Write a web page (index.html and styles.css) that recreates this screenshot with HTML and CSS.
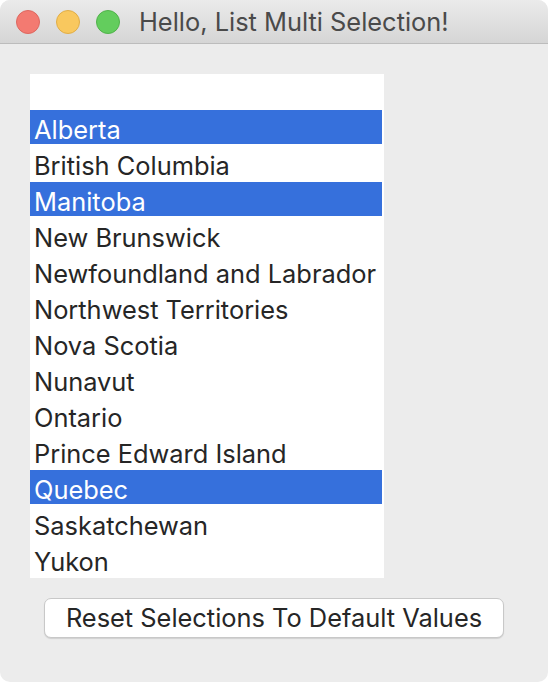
FILE: index.html
```html
<!DOCTYPE html>
<html>
<head>
<meta charset="utf-8">
<link rel="stylesheet" href="styles.css">
</head>
<body>
<div class="window">
  <div class="titlebar">
    <span class="light red"></span>
    <span class="light yellow"></span>
    <span class="light green"></span>
    <span class="title">Hello, List Multi Selection!</span>
  </div>
  <div class="content">
    <div class="list">
      <div class="row blank"></div>
      <div class="row selected">Alberta</div>
      <div class="row">British Columbia</div>
      <div class="row selected">Manitoba</div>
      <div class="row">New Brunswick</div>
      <div class="row">Newfoundland and Labrador</div>
      <div class="row">Northwest Territories</div>
      <div class="row">Nova Scotia</div>
      <div class="row">Nunavut</div>
      <div class="row">Ontario</div>
      <div class="row">Prince Edward Island</div>
      <div class="row selected">Quebec</div>
      <div class="row">Saskatchewan</div>
      <div class="row">Yukon</div>
    </div>
    <button class="reset">Reset Selections To Default Values</button>
  </div>
</div>
</body>
</html>
```

FILE: styles.css
```css
html, body {
  margin: 0;
  padding: 0;
  background: #ffffff;
}
body {
  width: 548px;
  height: 682px;
  overflow: hidden;
  font-family: Inter, "Noto Sans", "Liberation Sans", sans-serif;
}
.window {
  width: 548px;
  height: 682px;
  background: #ececec;
  border-radius: 10px;
  overflow: hidden;
  display: flex;
  flex-direction: column;
}
.titlebar {
  height: 43px;
  flex: none;
  border-bottom: 1px solid #bcbcbc;
  background: linear-gradient(#ebebeb, #d5d5d5);
  display: flex;
  align-items: center;
  padding-left: 16px;
  gap: 16px;
}
.light {
  width: 22px;
  height: 22px;
  border-radius: 50%;
  flex: none;
  border: 1px solid;
}
.red { background: #f37a71; border-color: #dd675f; }
.yellow { background: #f9c85e; border-color: #e0ad47; }
.green { background: #63cd5d; border-color: #51b24b; }
.title {
  margin-left: 3px;
  font-size: 25.4px;
  color: #4a4a4a;
  line-height: 30px;
}
.content {
  padding: 30px 30px 0 30px;
  display: flex;
  flex-direction: column;
  align-items: flex-start;
}
.list {
  width: 352px;
  padding-right: 2px;
  height: 504px;
  background: #ffffff;
}
.row {
  height: 33px;
  padding-top: 3px;
  line-height: 33px;
  padding-left: 4px;
  font-size: 25.4px;
  color: #262626;
  white-space: nowrap;
}
.row.selected {
  color: #ffffff;
  background: linear-gradient(#3670dc, #3670dc) top left / 100% 34px no-repeat;
}
.reset {
  margin: 20px 0 0 14px;
  width: 460px;
  height: 40px;
  background: #ffffff;
  border: 1px solid #c8c8c8;
  border-radius: 7px;
  box-shadow: 0 1px 1px rgba(0, 0, 0, 0.12);
  font-family: inherit;
  font-size: 25.4px;
  color: #262626;
  padding: 0;
  line-height: 36px;
}
```
